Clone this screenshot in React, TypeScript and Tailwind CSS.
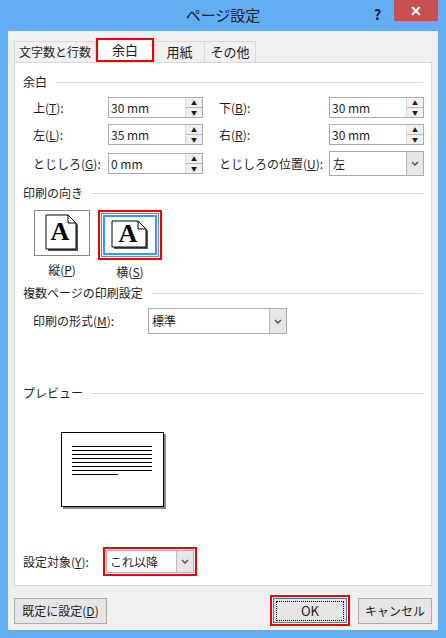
import React from "react";

const font = { fontFamily: '"Noto Sans CJK JP", "Noto Sans", sans-serif' };

function U({ c }: { c: string }) {
  return <span className="underline">{c}</span>;
}

function Spin({ value }: { value: string }) {
  return (
    <div className="flex h-[21px] w-[95px] border border-[#abadb3] bg-white">
      <div className="flex-1 pl-[2px] leading-[19px]">{value}</div>
      <div className="flex w-[17px] flex-col border-l border-[#d9d9d9] bg-[#f0f0f0]">
        <div className="flex flex-1 items-center justify-center border-b border-[#bbb] text-[6px] leading-none">▲</div>
        <div className="flex flex-1 items-center justify-center text-[6px] leading-none">▼</div>
      </div>
    </div>
  );
}

function Select({ value, w, h = 24 }: { value: string; w: number; h?: number }) {
  return (
    <div className="flex border border-[#abadb3] bg-white" style={{ width: w, height: h }}>
      <div className="flex flex-1 items-center pl-[3px]">{value}</div>
      <div className="flex w-[17px] items-center justify-center border-l border-[#bbb] bg-[#e6e6e6]">
        <svg width="8" height="5" viewBox="0 0 8 5"><path d="M1 1l3 3 3-3" stroke="#555" strokeWidth="1.5" fill="none" /></svg>
      </div>
    </div>
  );
}

function Group({ title }: { title: string }) {
  return (
    <div className="flex items-center gap-2">
      <span>{title}</span>
      <div className="h-px flex-1 bg-[#dcdcdc]" />
    </div>
  );
}

function Page({ w, h }: { w: number; h: number }) {
  return (
    <svg width={w + 4} height={h + 4} viewBox={`0 0 ${w + 4} ${h + 4}`}>
      <path d={`M2 2h${w - 8}l8 8v${h - 8}h-${w}z`} fill="#555" transform="translate(1,1)" />
      <path d={`M1 1h${w - 8}l8 8v${h - 8}h-${w}z`} fill="white" stroke="black" />
      <path d={`M${w - 7} 1v8h8`} fill="none" stroke="black" />
      <text x={w / 2} y={h / 2 + 9} textAnchor="middle" fontFamily="Liberation Serif, serif" fontSize="26" fontWeight="bold">A</text>
    </svg>
  );
}

export default function App() {
  return (
    <div className="h-[638px] w-[446px] bg-[#63adf2] text-[12px] text-[#1e1e1e]" style={font}>
      <div className="relative flex h-[31px] items-center justify-center text-[15px] text-[#222]">
        ページ設定
        <span className="absolute left-[374px] top-[4px] text-[14px] font-bold">?</span>
        <div className="absolute left-[394px] top-0 flex h-[21px] w-[44px] items-center justify-center bg-[#c75050] text-[14px] font-bold text-white">✕</div>
      </div>
      <div className="mx-[8px] h-[599px] bg-[#f0f0f0] px-[6px] pt-[9px]">
        <div className="flex h-[22px] items-end">
          <div className="flex h-[21px] w-[82px] items-center justify-center border border-b-0 border-[#d9d9d9] bg-[#f0f0f0] text-[12px]">文字数と行数</div>
          <div className="flex h-[24px] w-[58px] items-center justify-center border-2 border-[#e00] bg-white text-[13px]">余白</div>
          <div className="flex h-[21px] w-[51px] items-center justify-center border border-b-0 border-[#d9d9d9] text-[13px]">用紙</div>
          <div className="flex h-[21px] w-[51px] items-center justify-center border border-b-0 border-l-0 border-[#d9d9d9] text-[13px]">その他</div>
        </div>
        <div className="h-[524px] border border-[#d9d9d9] bg-white px-[8px] pt-[10px]">
          <Group title="余白" />
          <div className="mt-[6px] grid grid-cols-[75px_95px_126px_95px] items-center gap-y-[6px] whitespace-nowrap pl-[10px]">
            <span>上(<U c="T" />):</span>
            <Spin value="30 mm" />
            <span className="pl-[16px]">下(<U c="B" />):</span>
            <Spin value="30 mm" />
            <span>左(<U c="L" />):</span>
            <Spin value="35 mm" />
            <span className="pl-[16px]">右(<U c="R" />):</span>
            <Spin value="30 mm" />
            <span>とじしろ(<U c="G" />):</span>
            <Spin value="0 mm" />
            <span className="pl-[16px]">とじしろの位置(<U c="U" />):</span>
            <Select value="左" w={95} h={25} />
          </div>
          <div className="mt-[8px]"><Group title="印刷の向き" /></div>
          <div className="mt-[8px] flex gap-[8px] pl-[11px]">
            <div className="flex flex-col items-center">
              <div className="flex h-[46px] w-[56px] items-center justify-center border border-[#888]">
                <Page w={30} h={34} />
              </div>
              <span className="mt-[5px]">縦(<U c="P" />)</span>
            </div>
            <div className="flex flex-col items-center">
              <div className="flex h-[50px] w-[64px] items-center justify-center border-2 border-[#e00]">
                <div className="flex h-[44px] w-[58px] items-center justify-center border border-[#888] p-px">
                  <div className="flex h-full w-full items-center justify-center border-2 border-[#3399ff]">
                    <Page w={34} h={26} />
                  </div>
                </div>
              </div>
              <span className="mt-[3px]">横(<U c="S" />)</span>
            </div>
          </div>
          <div className="mt-[3px]"><Group title="複数ページの印刷設定" /></div>
          <div className="mt-[6px] flex items-center pl-[10px]">
            <span className="w-[115px]">印刷の形式(<U c="M" />):</span>
            <Select value="標準" w={139} h={26} />
          </div>
          <div className="mt-[50px]"><Group title="プレビュー" /></div>
          <div className="ml-[38px] mt-[30px] h-[75px] w-[103px] border border-black bg-white px-[10px] pt-[13px] shadow-[2px_2px_0_#888]">
            {[80, 80, 80, 80, 80, 80, 80, 46].map((w, i) => (
              <div key={i} className="mb-[3px] h-px bg-black" style={{ width: w }} />
            ))}
          </div>
          <div className="mt-[40px] flex items-center">
            <span className="w-[80px]">設定対象(<U c="Y" />):</span>
            <div className="border-2 border-[#e00] p-px">
              <Select value="これ以降" w={88} h={23} />
            </div>
          </div>
        </div>
        <div className="mt-[9px] flex items-center">
          <div className="flex h-[26px] w-[93px] items-center justify-center border border-[#acacac] bg-[#e5e5e5]">既定に設定(<U c="D" />)</div>
          <div className="ml-auto flex h-[31px] w-[80px] items-center justify-center border-2 border-[#e00] bg-white p-px">
            <div className="flex h-full w-full items-center justify-center border border-[#3c7fb1] bg-[#e5e5e5]">
              <div className="flex h-[20px] w-[68px] items-center justify-center border border-dotted border-black text-[13px]">OK</div>
            </div>
          </div>
          <div className="ml-[8px] flex h-[26px] w-[74px] items-center justify-center border border-[#acacac] bg-[#e5e5e5]">キャンセル</div>
        </div>
      </div>
    </div>
  );
}
